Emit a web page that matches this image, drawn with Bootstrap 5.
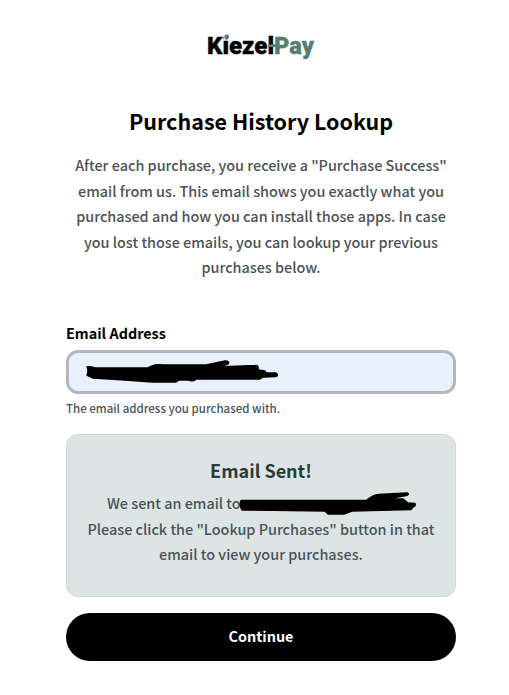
<!DOCTYPE html>
<html lang="en">
<head>
<meta charset="utf-8">
<meta name="viewport" content="width=device-width, initial-scale=1">
<title>KiezelPay - Purchase History Lookup</title>
<link href="https://cdn.jsdelivr.net/npm/bootstrap@5.3.0/dist/css/bootstrap.min.css" rel="stylesheet">
<style>
body{font-family:"Noto Sans CJK SC","Noto Sans",sans-serif;font-size:14.4px;font-weight:500;line-height:25.6px;color:#4b5358;background:#fff;overflow:hidden}
.lookup{width:390px;margin-left:66px;padding-top:32px}
.brand{height:30px}
.title{font-size:21.5px;line-height:32px;font-weight:700;color:#000;margin:43px 0 15px}
.intro{margin-bottom:41px}
.line{display:block;white-space:nowrap}
.field-label{font-size:14.4px;font-weight:700;color:#000;line-height:24px;margin-bottom:5px}
.field-box{height:44px;border:3px solid #b3b7be!important;border-radius:12px;background:#e8effd!important}
.ink{position:absolute;left:0;top:0;overflow:visible;pointer-events:none;stroke:#000;stroke-width:1.4;stroke-linejoin:round}
.hint{font-size:11.52px;line-height:20px;margin:4px 0 16px}
.notice{height:163px;border:1px solid #cdd9d6;border-radius:12px;background:#dce5e3;padding:21px 0 0}
.notice-title{font-size:18px;line-height:28px;font-weight:700;color:#2b3b3b;margin-bottom:6px}
.sent{padding-left:40px}
.go{height:48px;margin-top:16px;padding:0 0 2px;font-size:14.4px;font-weight:700;background:#000!important;border:0}
</style>
<script src="https://cdn.jsdelivr.net/npm/bootstrap@5.3.0/dist/js/bootstrap.bundle.min.js"></script>
</head>
<body>
<main class="lookup">
  <div class="brand d-flex justify-content-center">
    <svg width="108" height="30" viewBox="0 0 108 30" role="img" aria-label="KiezelPay" font-family="Roboto, sans-serif" font-weight="900" font-size="24.5">
      <text x="0" y="22" stroke="#000" stroke-width=".4" textLength="67" lengthAdjust="spacingAndGlyphs">Kiezel</text>
      <path d="M17 1H22.6V7.8H17Z" fill="#fff"/>
      <circle cx="19.7" cy="5" r="2.4" fill="#547d74"/>
      <text x="67" y="22" fill="#547d74" stroke="#547d74" stroke-width=".3" textLength="40" lengthAdjust="spacingAndGlyphs">Pay</text>
      <path d="M61 13.7H70" stroke="#547d74" stroke-width="2.8"/>
    </svg>
  </div>
  <h1 class="title text-center">Purchase History Lookup</h1>
  <p class="intro text-center">
    <span class="line">After each purchase, you receive a "Purchase Success"</span>
    <span class="line">email from us. This email shows you exactly what you</span>
    <span class="line">purchased and how you can install those apps. In case</span>
    <span class="line">you lost those emails, you can lookup your previous</span>
    <span class="line">purchases below.</span>
  </p>
  <form>
    <label class="field-label d-block" for="email">Email Address</label>
    <div class="position-relative">
      <input class="form-control field-box shadow-none" id="email" type="email">
      <svg class="ink" width="390" height="44" viewBox="66 350 390 44">
        <path d="M87 367Q90 366 95 368L148 368 152 366Q156 364 164 365L206 365 225 361Q230 361 228 364L218 367 255 365.500Q259 365 258 370L265 371 266 373 276 373Q279 375 276 376.500L263 377 260 379 196 379Q194 382 189 380L179 380 176 382 152 382 125 380 93 378 87 375Q89 371 87 367Z"/>
      </svg>
    </div>
    <div class="hint">The email address you purchased with.</div>
    <section class="notice text-center position-relative">
      <h2 class="notice-title">Email Sent!</h2>
      <span class="line text-start sent">We sent an email to</span>
      <span class="line">Please click the "Lookup Purchases" button in that</span>
      <span class="line">email to view your purchases.</span>
      <svg class="ink" width="388" height="161" viewBox="67 435 388 161">
        <path d="M241 500.500L366 500.500Q373 495 379 494.500L407 493Q410 494 406 495.500L386 499 403 499 408 503 415 503.500Q416 506 413 507L411 509.500 352 511 344 514 328 514 325 511 242 510Q239 505 241 500.500Z"/>
      </svg>
    </section>
    <button class="btn btn-dark rounded-pill w-100 go" type="button">Continue</button>
  </form>
</main>
</body>
</html>
